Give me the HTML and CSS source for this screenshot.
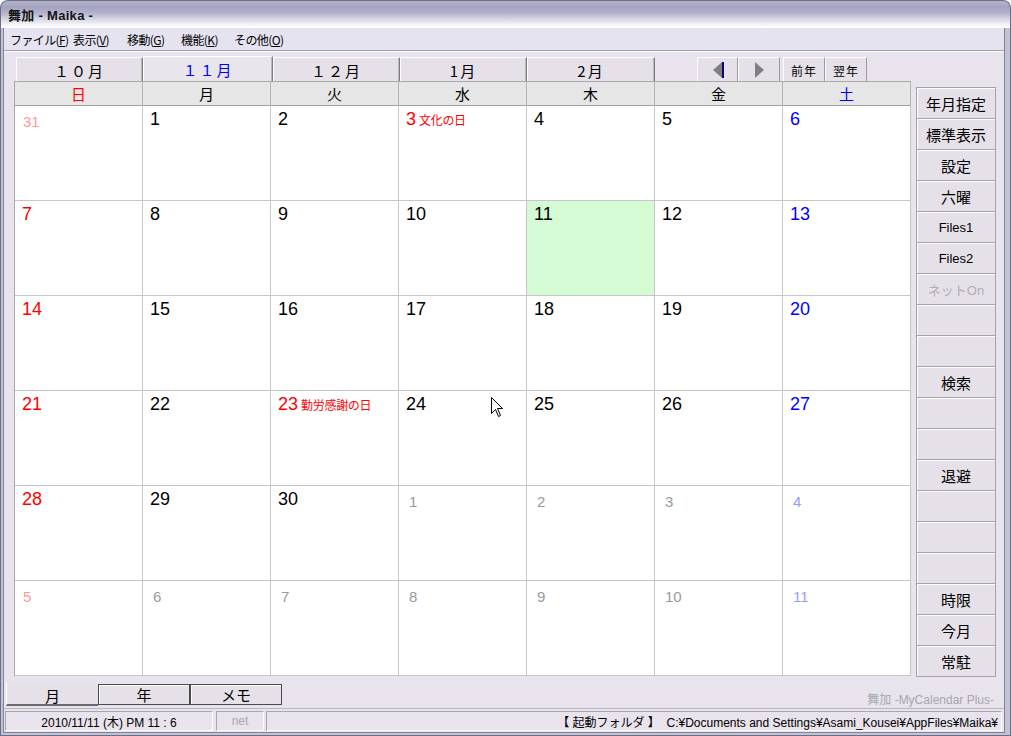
FILE: index.html
```html
<!DOCTYPE html>
<html lang="ja">
<head>
<meta charset="utf-8">
<title>舞加 - Maika -</title>
<link rel="stylesheet" href="styles.css">
</head>
<body>
<div class="titlebar"><span class="title">舞加 - Maika -</span></div>
<div class="frame">
  <div class="inner">
    <div class="menubar">
      <span class="mi m1">ファイル(<u>F</u>)</span>
      <span class="mi m2">表示(<u>V</u>)</span>
      <span class="mi m3">移動(<u>G</u>)</span>
      <span class="mi m4">機能(<u>K</u>)</span>
      <span class="mi m5">その他(<u>O</u>)</span>
    </div>
    <div class="client">
      <div class="main">
        <div class="leftcol">
          <div class="tabrow">
            <div class="mtab w127">１０月</div>
            <div class="mtab w130 sel">１１月</div>
            <div class="mtab w127">１２月</div>
            <div class="mtab w127">1月</div>
            <div class="mtab w128">2月</div>
            <div class="navs">
              <div class="nbtn arrow"><svg width="14" height="18" viewBox="0 0 14 18"><polygon points="11,1 11,17 2,9" fill="#808080"/><rect x="11" y="1" width="2" height="16" fill="#0a0a6a"/></svg></div>
              <div class="nbtn arrow"><svg width="14" height="18" viewBox="0 0 14 18"><polygon points="3,1 3,17 12,9" fill="#808080"/></svg></div>
              <div class="nbtn yr">前年</div>
              <div class="nbtn yr">翌年</div>
            </div>
          </div>
          <div class="calendar">
            <div class="hd sun">日</div><div class="hd">月</div><div class="hd">火</div><div class="hd">水</div><div class="hd">木</div><div class="hd">金</div><div class="hd sat">土</div>

            <div class="cell"><span class="n other psun">31</span></div>
            <div class="cell"><span class="n">1</span></div>
            <div class="cell"><span class="n">2</span></div>
            <div class="cell"><span class="n red">3</span><span class="hol">文化の日</span></div>
            <div class="cell"><span class="n">4</span></div>
            <div class="cell"><span class="n">5</span></div>
            <div class="cell"><span class="n blue">6</span></div>

            <div class="cell"><span class="n red">7</span></div>
            <div class="cell"><span class="n">8</span></div>
            <div class="cell"><span class="n">9</span></div>
            <div class="cell"><span class="n">10</span></div>
            <div class="cell today"><span class="n">11</span></div>
            <div class="cell"><span class="n">12</span></div>
            <div class="cell"><span class="n blue">13</span></div>

            <div class="cell"><span class="n red">14</span></div>
            <div class="cell"><span class="n">15</span></div>
            <div class="cell"><span class="n">16</span></div>
            <div class="cell"><span class="n">17</span></div>
            <div class="cell"><span class="n">18</span></div>
            <div class="cell"><span class="n">19</span></div>
            <div class="cell"><span class="n blue">20</span></div>

            <div class="cell"><span class="n red">21</span></div>
            <div class="cell"><span class="n">22</span></div>
            <div class="cell"><span class="n red">23</span><span class="hol">勤労感謝の日</span></div>
            <div class="cell"><span class="n">24</span></div>
            <div class="cell"><span class="n">25</span></div>
            <div class="cell"><span class="n">26</span></div>
            <div class="cell"><span class="n blue">27</span></div>

            <div class="cell"><span class="n red">28</span></div>
            <div class="cell"><span class="n">29</span></div>
            <div class="cell"><span class="n">30</span></div>
            <div class="cell"><span class="n other">1</span></div>
            <div class="cell"><span class="n other">2</span></div>
            <div class="cell"><span class="n other">3</span></div>
            <div class="cell"><span class="n other psat">4</span></div>

            <div class="cell"><span class="n other psun">5</span></div>
            <div class="cell"><span class="n other">6</span></div>
            <div class="cell"><span class="n other">7</span></div>
            <div class="cell"><span class="n other">8</span></div>
            <div class="cell"><span class="n other">9</span></div>
            <div class="cell"><span class="n other">10</span></div>
            <div class="cell"><span class="n other psat">11</span></div>

            <svg class="cursor" width="13" height="21" viewBox="0 0 13 21"><path d="M0.5 0.5 L0.5 16.5 L4.5 12.5 L7.5 19.5 L9.5 18.5 L6.5 11.5 L11.5 11.5 Z" fill="#fff" stroke="#000" stroke-width="1"/></svg>
          </div>
        </div>
        <div class="side">
          <div class="sbtn">年月指定</div>
          <div class="sbtn">標準表示</div>
          <div class="sbtn">設定</div>
          <div class="sbtn">六曜</div>
          <div class="sbtn small">Files1</div>
          <div class="sbtn small">Files2</div>
          <div class="sbtn small dis">ネットOn</div>
          <div class="sbtn"></div>
          <div class="sbtn"></div>
          <div class="sbtn">検索</div>
          <div class="sbtn"></div>
          <div class="sbtn"></div>
          <div class="sbtn">退避</div>
          <div class="sbtn"></div>
          <div class="sbtn"></div>
          <div class="sbtn"></div>
          <div class="sbtn">時限</div>
          <div class="sbtn">今月</div>
          <div class="sbtn">常駐</div>
        </div>
      </div>
      <div class="bottomrow">
        <div class="btab sel">月</div>
        <div class="btab">年</div>
        <div class="btab">メモ</div>
        <div class="brand">舞加 -MyCalendar Plus-</div>
      </div>
    </div>
    <div class="status">
      <div class="pane p1">2010/11/11 (木) PM 11 : 6</div>
      <div class="pane p2">net</div>
      <div class="pane p3">【 起動フォルダ 】&nbsp;&nbsp;C:¥Documents and Settings¥Asami_Kousei¥AppFiles¥Maika¥</div>
    </div>
  </div>
</div>
</body>
</html>
```

FILE: styles.css
```css
* { box-sizing: border-box; }
html, body { margin: 0; padding: 0; }
body {
  width: 1011px;
  height: 736px;
  overflow: hidden;
  background: #ffffff;
  font-family: "Liberation Sans", "Noto Sans CJK JP", sans-serif;
  color: #000;
}

.titlebar {
  height: 28px;
  border: 1px solid #6e6d86;
  border-bottom: none;
  border-radius: 8px 8px 0 0;
  background: linear-gradient(to bottom, #b4b3cb 0px, #a5a4c0 6px, #b3b2cb 12px, #d6d6e3 18px, #f6f6fa 24px, #ffffff 27px);
  display: flex;
  align-items: center;
  padding-left: 7px;
}
.title {
  font-weight: bold;
  font-size: 13px;
  color: #141414;
  letter-spacing: 0.3px;
}

.frame {
  height: 708px;
  border: 1px solid #6e6d86;
  border-top: none;
  background: #c3c2d3;
  padding: 0 5px 2px 2px;
}
.inner {
  height: 705px;
  border: 1px solid #84839a;
  border-top: none;
  background: #e8e3ec;
  display: flex;
  flex-direction: column;
}

.menubar {
  height: 23px;
  flex: none;
  background: #e5e3ef;
  border-bottom: 1px solid #9d9cb2;
  display: flex;
  align-items: center;
  font-size: 12px;
  font-family: "Noto Sans CJK JP", sans-serif;
  letter-spacing: -0.6px;
}
.mi { display: block; }
.m1 { margin-left: 6px; width: 63px; }
.m2 { width: 54px; }
.m3 { width: 54px; }
.m4 { width: 53px; }
.mi u { text-decoration: underline; }

.client {
  height: 657px;
  flex: none;
  border-top: 1px solid #ffffff;
  display: flex;
  flex-direction: column;
  background: #e8e3ec;
}

.main {
  display: flex;
  height: 625px;
  flex: none;
}
.leftcol {
  margin-left: 10px;
  width: 897px;
  display: flex;
  flex-direction: column;
}
.tabrow {
  margin-top: 4px;
  height: 25px;
  display: flex;
  align-items: flex-end;
  padding-left: 2px;
}
.mtab {
  height: 24px;
  background: #e6e1e9;
  border-top: 1px solid #ffffff;
  border-left: 1px solid #ffffff;
  border-right: 1px solid #7d7d7d;
  box-shadow: inset -1px 0 0 #b8b8b8;
  font-size: 15px;
  font-family: "Noto Sans CJK JP", sans-serif;
  letter-spacing: 2px;
  display: flex;
  align-items: center;
  justify-content: center;
  padding-top: 1px;
}
.mtab.sel {
  height: 25px;
  color: #0000ff;
  background: #e9e5ec;
}
.w127 { width: 127px; }
.w128 { width: 128px; }
.w130 { width: 130px; }

.navs {
  display: flex;
  margin-left: 42px;
  height: 24px;
}
.nbtn {
  height: 24px;
  background: #e6e1e9;
  border-left: 1px solid #ffffff;
  border-top: 1px solid #ffffff;
  border-right: 1px solid #9a9a9a;
  display: flex;
  align-items: center;
  justify-content: center;
}
.nbtn.arrow { width: 41px; }
.nbtn.arrow + .nbtn.arrow { width: 42px; }
.nbtn.yr {
  width: 42px;
  font-size: 12px;
  font-family: "Noto Sans CJK JP", sans-serif;
  letter-spacing: 1px;
  padding-top: 1px;
}
.nbtn.arrow + .nbtn.yr { margin-left: 3px; }

.calendar {
  position: relative;
  display: grid;
  grid-template-columns: repeat(7, 128px);
  grid-template-rows: 25px repeat(6, 95px);
  border-left: 1px solid #a8a8a8;
  background: #ffffff;
  width: 897px;
}
.hd {
  background: #e6e6e6;
  border-right: 1px solid #b4b4b4;
  border-bottom: 1px solid #a0a0a0;
  border-top: 1px solid #a8a8a8;
  font-size: 15px;
  font-family: "Noto Sans CJK JP", sans-serif;
  display: flex;
  align-items: center;
  justify-content: center;
}
.hd.sun { color: #ff0000; }
.hd.sat { color: #0000ff; }

.cell {
  border-right: 1px solid #c6c6c6;
  border-bottom: 1px solid #c6c6c6;
  padding: 4px 0 0 7px;
  background: #ffffff;
  display: flex;
  align-items: baseline;
  align-content: flex-start;
}
.cell.today { background: #d4fbd4; }
.n {
  font-size: 18px;
  line-height: 18px;
  color: #000;
}
.n.red { color: #ff0000; }
.n.blue { color: #0000ff; }
.n.other {
  font-size: 15px;
  line-height: 15px;
  color: #9a9a9a;
  margin-top: 4px;
  margin-left: 3px;
}
.n.other.psun { color: #ff9999; margin-left: 1px; }
.n.other.psat { color: #9999ff; }
.hol {
  font-size: 12px;
  color: #ff0000;
  font-family: "Noto Sans CJK JP", sans-serif;
  margin-left: 3px;
  letter-spacing: -0.3px;
}

.cursor {
  position: absolute;
  left: 476px;
  top: 316px;
}

.side {
  margin-left: 5px;
  margin-top: 35px;
  width: 80px;
  display: flex;
  flex-direction: column;
  border-top: 1px solid #a3a3a3;
}
.sbtn {
  height: 31px;
  flex: none;
  border: 1px solid #a3a3a3;
  border-top: none;
  background: #e6e1e9;
  box-shadow: inset 1px 1px 0 #ffffff;
  font-size: 15px;
  font-family: "Noto Sans CJK JP", sans-serif;
  display: flex;
  align-items: center;
  justify-content: center;
}
.sbtn.small { font-size: 13px; font-family: "Liberation Sans", "Noto Sans CJK JP", sans-serif; }
.sbtn.dis { color: #b0adb5; }

.bottomrow {
  flex: none;
  height: 31px;
  display: flex;
  align-items: flex-start;
  padding-top: 6px;
  padding-left: 2px;
}
.btab {
  height: 21px;
  width: 92px;
  border: 1px solid #4a4a4a;
  box-shadow: inset 1px 1px 0 #ffffff;
  background: #e6e1e9;
  font-size: 15px;
  font-family: "Noto Sans CJK JP", sans-serif;
  display: flex;
  align-items: center;
  justify-content: center;
  line-height: 1;
  margin-top: 1px;
}
.btab.sel {
  width: 92px;
  height: 23px;
  margin-top: 0;
  border: none;
  border-left: 1px solid #ffffff;
  border-bottom: 2px solid #6a6a6a;
  box-shadow: none;
  align-items: flex-end;
  padding-bottom: 1px;
}
.brand {
  margin-left: auto;
  margin-right: 10px;
  margin-top: 7px;
  font-size: 12px;
  color: #a9a6ad;
  font-family: "Liberation Sans", "Noto Sans CJK JP", sans-serif;
}

.status {
  flex: none;
  height: 24px;
  display: flex;
  padding-top: 2px;
  border-top: 1px solid #b8b6c0;
  background: #e8e3ec;
}
.pane {
  height: 20px;
  border-top: 1px solid #a8a8a8;
  border-left: 1px solid #a8a8a8;
  border-right: 1px solid #ffffff;
  border-bottom: 1px solid #ffffff;
  font-size: 12px;
  display: flex;
  align-items: center;
  font-family: "Liberation Sans", "Noto Sans CJK JP", sans-serif;
}
.p1 { margin-left: 1px; width: 208px; justify-content: center; }
.p2 { margin-left: 3px; width: 48px; justify-content: center; color: #a9a9a9; }
.p3 { margin-left: 2px; flex: 1; margin-right: 2px; justify-content: flex-end; padding-right: 3px; white-space: nowrap; }
```
